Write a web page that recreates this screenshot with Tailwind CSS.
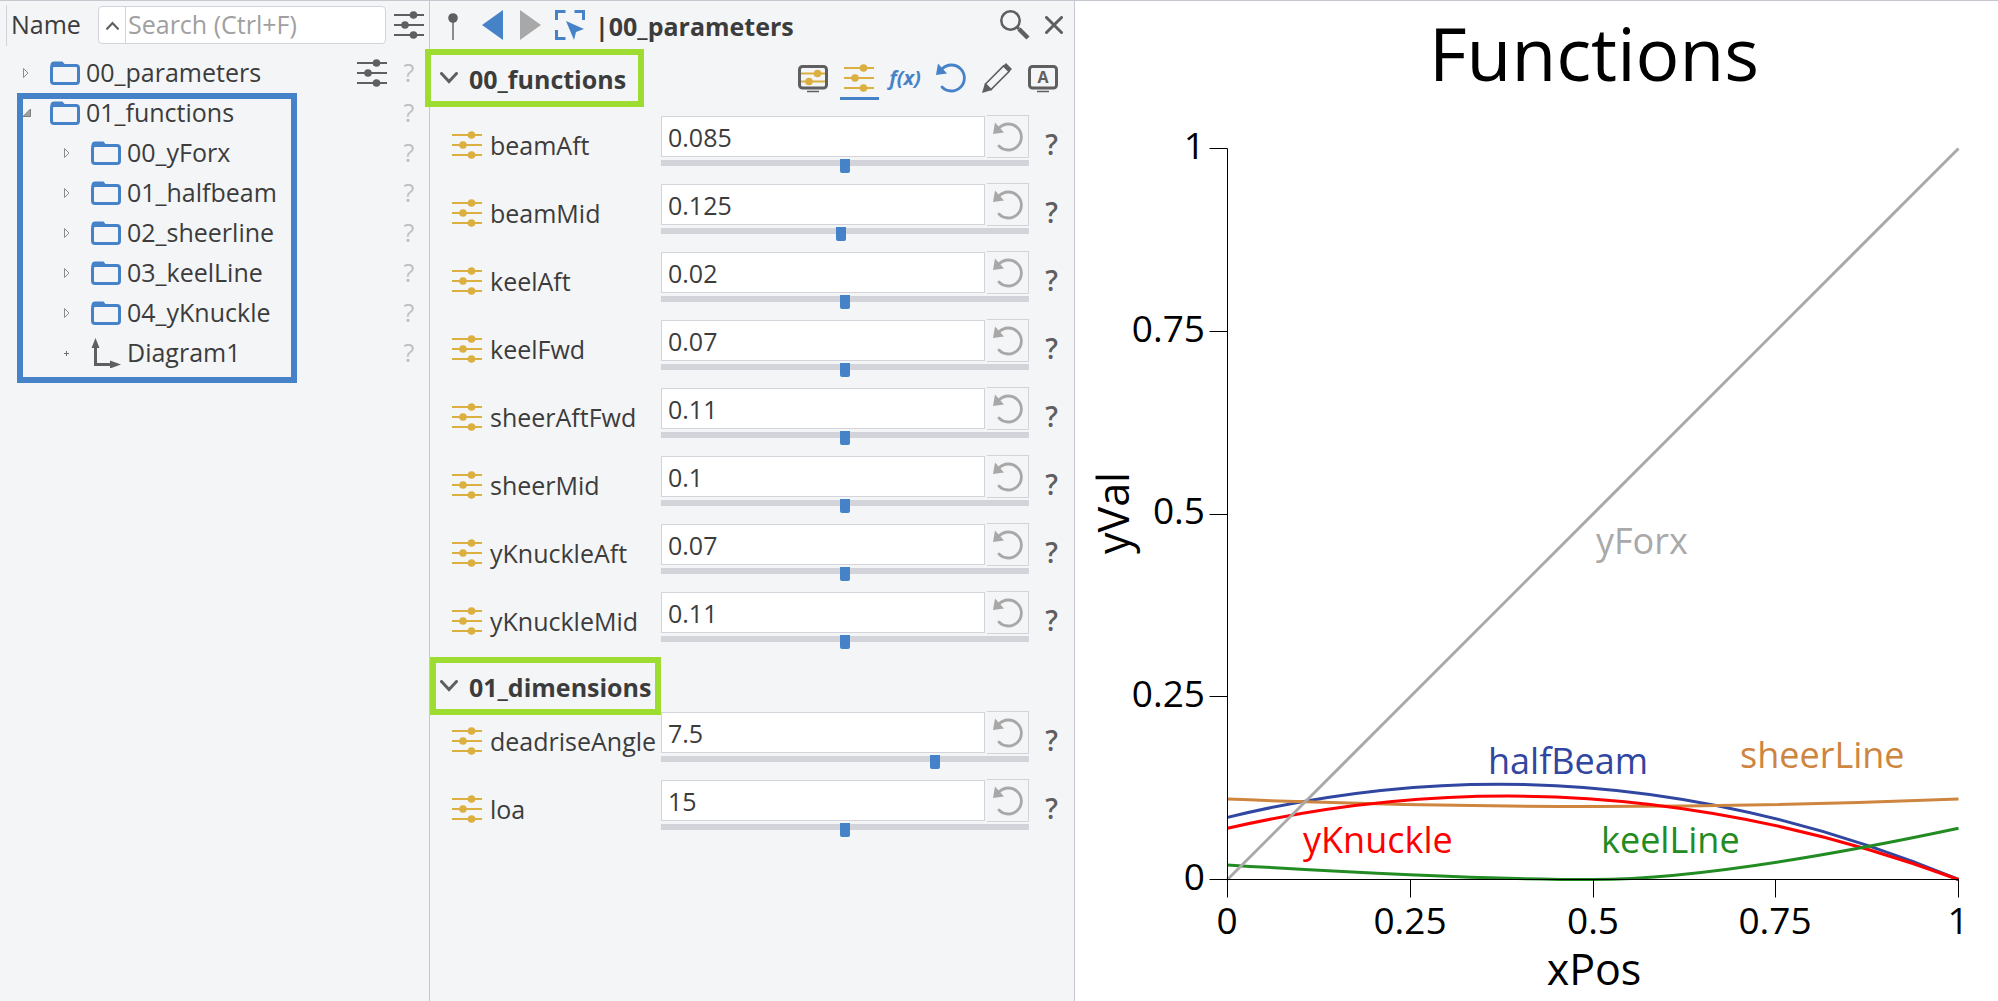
<!DOCTYPE html>
<html lang="en">

<head>
    <meta charset="UTF-8" />
    <meta name="viewport" content="width=device-width, initial-scale=1.0" />
    <title>Functions</title>
    <script src="https://cdn.jsdelivr.net/npm/@tailwindcss/browser@4"></script>
</head>

<body class="min-h-screen flex border-t border-[#c6c8d0] bg-white font-['Open_Sans','Noto_Sans',sans-serif] text-[25px] text-[#3c3c3c]">

    <!-- Icon sprite -->
    <svg class="hidden">
        <symbol id="sliders" viewBox="0 0 30 30">
            <path d="M0 5H30M0 15H30M0 25H30" stroke="currentColor" stroke-width="2" />
            <g fill="currentColor"><circle cx="19.500" cy="5" r="3.800" /><circle cx="11" cy="15" r="3.800" /><circle cx="19.500" cy="25" r="3.800" /></g>
        </symbol>
        <symbol id="folder" viewBox="0 0 30 24">
            <path d="M1.500 6V4Q1.500 1.500 4 1.500H12L14.500 4.500H1.500Z" fill="currentColor" stroke="currentColor" stroke-width="2" />
            <rect x="1.500" y="4.500" width="27" height="18" rx="2.500" fill="none" stroke="currentColor" stroke-width="3" />
        </symbol>
        <symbol id="undo" viewBox="0 0 30 30">
            <path d="M6 6A13 13 0 1 1 6 24" fill="none" stroke="currentColor" stroke-width="2.800" stroke-linecap="round" />
            <path d="M2 0.500L0 12L11 10.500Z" fill="currentColor" />
        </symbol>
        <symbol id="screen" viewBox="0 0 30 30">
            <rect x="1.500" y="3.500" width="27" height="21.500" rx="3" fill="none" stroke="currentColor" stroke-width="3" />
            <path d="M9 28.500H21" stroke="currentColor" stroke-width="1.500" />
        </symbol>
        <symbol id="chevron" viewBox="0 0 18 12">
            <path d="M1.500 1.500L9 9.500L16.500 1.500" fill="none" stroke="currentColor" stroke-width="3" stroke-linecap="round" />
        </symbol>
    </svg>

    <!-- Object tree -->
    <aside class="w-[430px] shrink-0 bg-[#f4f5f7] border-r border-[#c6c8d0]">
        <div class="h-12 mb-1 flex items-center pl-[6px] pr-[5px]">
            <div class="h-[41px] border-l border-[#d2d4da] mr-1"></div>
            <label for="search" class="w-[87px] shrink-0">Name</label>
            <div class="flex-1 min-w-0 h-[38px] flex bg-white border border-[#d2d4da] rounded">
                <button class="w-[27px] shrink-0 border-r border-[#d2d4da] flex items-center justify-center text-[#5f5f5f]" aria-label="Collapse">
                    <svg class="w-[13px] h-[9px] rotate-180"><use href="#chevron" /></svg>
                </button>
                <input id="search" type="text" placeholder="Search (Ctrl+F)" class="flex-1 min-w-0 pl-[2px] outline-none placeholder:text-[#a0a0a0]">
            </div>
            <button class="ml-2 shrink-0 text-[#5f5f5f]" aria-label="Filter"><svg class="w-[30px] h-[30px]"><use href="#sliders" /></svg></button>
        </div>
        <div id="tree"></div>
    </aside>

    <!-- Parameter editor -->
    <main class="w-[645px] shrink-0 bg-[#f4f5f7] border-r border-[#c6c8d0]">
        <header class="h-[47px] flex items-center pl-[18px] pr-[11px]">
            <button class="mr-[24px]" aria-label="Pin">
                <svg class="w-[10px] h-[30px]" viewBox="0 0 10 30"><path d="M5 8V30" stroke="#8c8c8c" stroke-width="2" /><circle cx="5" cy="8" r="4.800" fill="#5f5f5f" /></svg>
            </button>
            <button class="mr-[17px]" aria-label="Back">
                <svg class="w-[21px] h-[30px]" viewBox="0 0 21 30"><path d="M21 0V30L0 15Z" fill="#4682c8" /></svg>
            </button>
            <button class="mr-[14px]" aria-label="Forward">
                <svg class="w-[21px] h-[30px]" viewBox="0 0 21 30"><path d="M0 0V30L21 15Z" fill="#a8a8a8" /></svg>
            </button>
            <button class="mr-[10px]" aria-label="Select">
                <svg class="w-[30px] h-[30px]" viewBox="0 0 30 30">
                    <path d="M1.500 10V1.500H10.500M19.500 1.500H28.500V10M1.500 20V28.500H10.500" fill="none" stroke="#4682c8" stroke-width="3" />
                    <path d="M11 11L29 19L21 22L19 30Z" fill="#4682c8" />
                </svg>
            </button>
            <h1 class="flex-1 font-bold pt-1">|00_parameters</h1>
            <button class="mr-[15px]" aria-label="Find">
                <svg class="w-[30px] h-[30px]" viewBox="0 0 30 30" fill="none" stroke="#5f5f5f"><circle cx="10.500" cy="10.500" r="9.200" stroke-width="2.500" /><path d="M17 17L19 19" stroke-width="3" /><path d="M19 19L28 28" stroke-width="4.500" /></svg>
            </button>
            <button aria-label="Close">
                <svg class="w-[18px] h-[18px]" viewBox="0 0 18 18"><path d="M1.500 1.500L16.500 16.500M16.500 1.500L1.500 16.500" stroke="#5f5f5f" stroke-width="3" stroke-linecap="round" /></svg>
            </button>
        </header>

        <div class="flex items-center justify-between pr-4 mt-px mb-2">
            <h2 class="relative h-[58px] -ml-[5px] flex items-center gap-[11px] border-6 border-[#9fdc32] pl-[9px] pr-3 font-bold">
                <svg class="w-[18px] h-3 text-[#5f5f5f]"><use href="#chevron" /></svg><span class="pt-1">00_functions</span>
            </h2>
            <div class="flex items-center gap-4 text-[#5f5f5f]">
                <button class="relative" aria-label="Visible parameters">
                    <svg class="w-[30px] h-[30px]"><use href="#screen" /></svg>
                    <svg class="absolute inset-0 w-[30px] h-[30px] text-[#dcaf41]" viewBox="0 0 30 30"><path d="M3 10.500H27M3 18.500H27" stroke="currentColor" stroke-width="2" /><circle cx="19.500" cy="10.500" r="3.800" fill="currentColor" /><circle cx="11" cy="18.500" r="3.800" fill="currentColor" /></svg>
                </button>
                <button class="relative text-[#dcaf41]" aria-label="Parameters">
                    <svg class="w-[30px] h-[30px]"><use href="#sliders" /></svg>
                    <span class="absolute -left-1 -right-[5px] -bottom-[7px] h-[3px] bg-[#4682c8]"></span>
                </button>
                <button class="w-[30px] flex justify-center text-xl font-bold italic text-[#4682c8]">f(x)</button>
                <button class="text-[#4682c8]" aria-label="Reset all"><svg class="w-[30px] h-[30px]"><use href="#undo" /></svg></button>
                <button aria-label="Edit">
                    <svg class="w-[30px] h-[30px]" viewBox="0 0 30 30">
                        <path d="M3.500 21L21.500 3L27 8.500L9 26.500Z" fill="none" stroke="#5f5f5f" stroke-width="1.600" />
                        <path d="M0 30L3 20L10 27Z M21 3L24 0L30 6L27 9Z" fill="#5f5f5f" />
                    </svg>
                </button>
                <button class="relative" aria-label="Annotations">
                    <svg class="w-[30px] h-[30px]"><use href="#screen" /></svg>
                    <span class="absolute inset-0 text-center text-base font-bold leading-7">A</span>
                </button>
            </div>
        </div>
        <div id="functions" class="flex flex-col gap-[10px]"></div>

        <div class="flex mt-2 -mb-1">
            <h2 class="relative h-[58px] flex items-center gap-[11px] border-6 border-[#9fdc32] pl-1 pr-1 font-bold">
                <svg class="w-[18px] h-3 text-[#5f5f5f]"><use href="#chevron" /></svg><span class="pt-1">01_dimensions</span>
            </h2>
        </div>
        <div id="dimensions" class="flex flex-col gap-[10px]"></div>
    </main>

    <!-- Diagram -->
    <section class="flex-1 min-w-0">
        <svg class="w-full" viewBox="0 0 923 1000">
            <text x="519" y="80" font-size="73" text-anchor="middle">Functions</text>

            <g fill="none" stroke-width="3">
                <path d="M152.500 816.400Q518 726.800 883.500 878.500" stroke="#3046a0" />
                <path d="M152.500 798.100Q518 812.700 883.500 798.100" stroke="#cd853f" />
                <path d="M152.500 827.300Q518 743.300 883.500 878.500" stroke="#ff0000" />
                <path d="M152.500 863.900Q386.400 878.500 518 878.500Q642.300 878.500 883.500 827.300" stroke="#228b22" />
                <path d="M152.500 878.500L883.500 147.500" stroke="#a9a9a9" />
            </g>

            <!-- Axes -->
            <path d="M152.500 147.500V896.500M134.500 878.500H883.500M134.500 147.500H152.500M134.500 330.500H152.500M134.500 513.500H152.500M134.500 695.500H152.500M335.500 878.500V896.500M518.500 878.500V896.500M700.500 878.500V896.500M883.500 878.500V896.500" stroke="#000" fill="none" />
            <g font-size="37" text-anchor="end">
                <text x="130" y="158">1</text>
                <text x="130" y="341">0.75</text>
                <text x="130" y="523">0.5</text>
                <text x="130" y="706">0.25</text>
                <text x="130" y="889">0</text>
            </g>
            <g font-size="37" text-anchor="middle">
                <text x="152" y="933">0</text>
                <text x="335" y="933">0.25</text>
                <text x="518" y="933">0.5</text>
                <text x="700" y="933">0.75</text>
                <text x="883" y="933">1</text>
            </g>
            <text x="519" y="984" font-size="43" text-anchor="middle">xPos</text>
            <text transform="translate(54 512) rotate(-90)" font-size="43" text-anchor="middle">yVal</text>

            <!-- Curve names -->
            <g font-size="36">
                <text x="521" y="553" fill="#a9a9a9">yForx</text>
                <text x="413" y="773" fill="#3046a0">halfBeam</text>
                <text x="665" y="767" fill="#cd853f">sheerLine</text>
                <text x="228" y="852" fill="#ff0000">yKnuckle</text>
                <text x="526" y="852" fill="#228b22">keelLine</text>
            </g>
        </svg>
    </section>

    <script>
        const closedArrow = '<svg class="w-[6px] h-[10px]" viewBox="0 0 6 10"><path d="M0.500 0.500V9.500L5 5Z" fill="none" stroke="#8c8c8c" /></svg>';
        const openArrow = '<svg class="w-[8px] h-[8px]" viewBox="0 0 8 8"><path d="M7.500 0V7.500H0Z" fill="#a0a0a0" stroke="#7d7d7d" /></svg>';
        const leafMark = '<svg class="w-[5px] h-[5px]" viewBox="0 0 5 5"><path d="M0 2.500H5M2.500 0V5" stroke="#6e6e6e" /></svg>';
        const folder = '<svg class="w-[30px] h-6 text-[#4682c8]"><use href="#folder" /></svg>';
        const axes = '<svg class="w-[30px] h-[30px]" viewBox="0 0 30 30"><path d="M4.500 8V26.500H20" fill="none" stroke="#5f5f5f" stroke-width="3" /><path d="M0.500 10L4.500 0L8.500 10Z M19 22.500L30 26.500L19 30.500Z" fill="#5f5f5f" /></svg>';
        const rowSliders = '<button class="mr-4 text-[#5f5f5f]" aria-label="Parameters"><svg class="w-[30px] h-[30px]"><use href="#sliders" /></svg></button>';

        function treeRow(name, arrow, icon, indent, extra = '') {
            return `
                <div class="h-10 flex items-center pr-[14px] ${indent}">
                    <span class="w-[27px] flex">${arrow}</span>
                    ${icon}
                    <span class="flex-1 pl-[6px]">${name}</span>
                    ${extra}
                    <button class="w-3 flex justify-center text-[#c0c0c0]">?</button>
                </div>`;
        }

        const children = ['00_yForx', '01_halfbeam', '02_sheerline', '03_keelLine', '04_yKnuckle'];
        document.getElementById('tree').innerHTML =
            treeRow('00_parameters', closedArrow, folder, 'pl-[23px]', rowSliders) +
            '<div class="relative">' +
            treeRow('01_functions', openArrow, folder, 'pl-[23px]') +
            children.map(name => treeRow(name, closedArrow, folder, 'pl-[64px]')).join('') +
            treeRow('Diagram1', leafMark, axes, 'pl-[64px]') +
            '<div class="absolute left-[17px] top-0 -bottom-[10px] w-[280px] border-6 border-[#4682c8] pointer-events-none"></div>' +
            '</div>';

        function paramRow([name, value, position]) {
            return `
                <div class="h-[58px] flex items-center">
                    <label for="${name}" class="w-[231px] shrink-0 pl-[22px] pt-[2px] flex items-center gap-2">
                        <svg class="w-[30px] h-[30px] shrink-0 text-[#dcaf41]"><use href="#sliders" /></svg><span class="pt-[2px]">${name}</span>
                    </label>
                    <div class="flex-1 min-w-0">
                        <div class="h-[43px] mb-px flex items-center gap-[2px]">
                            <input id="${name}" type="text" value="${value}" class="flex-1 min-w-0 h-[41px] px-[6px] bg-white border border-[#d2d4da]">
                            <button class="w-[42px] h-[43px] flex items-center justify-center border border-l-0 border-[#d2d4da] text-[#a8a8a8]" aria-label="Reset ${name}">
                                <svg class="w-[30px] h-[30px]"><use href="#undo" /></svg>
                            </button>
                        </div>
                        <input type="range" min="0" max="100" value="${position}" aria-label="${name} slider" class="block w-full h-[14px] appearance-none bg-[linear-gradient(#d2d4da,#d2d4da)] bg-no-repeat bg-[length:100%_6px] bg-[position:0_1px] [&::-webkit-slider-thumb]:appearance-none [&::-webkit-slider-thumb]:w-[10px] [&::-webkit-slider-thumb]:h-[14px] [&::-webkit-slider-thumb]:rounded-b-xs [&::-webkit-slider-thumb]:bg-[#4682c8]">
                    </div>
                    <button class="w-[45px] shrink-0 flex justify-center text-[28px] font-semibold text-[#5f5f5f]">?</button>
                </div>`;
        }

        const functions = [
            ['beamAft', '0.085', 50],
            ['beamMid', '0.125', 49],
            ['keelAft', '0.02', 50],
            ['keelFwd', '0.07', 50],
            ['sheerAftFwd', '0.11', 50],
            ['sheerMid', '0.1', 50],
            ['yKnuckleAft', '0.07', 50],
            ['yKnuckleMid', '0.11', 50],
        ];
        const dimensions = [
            ['deadriseAngle', '7.5', 75],
            ['loa', '15', 50],
        ];
        document.getElementById('functions').innerHTML = functions.map(paramRow).join('');
        document.getElementById('dimensions').innerHTML = dimensions.map(paramRow).join('');
    </script>

</body>

</html>
